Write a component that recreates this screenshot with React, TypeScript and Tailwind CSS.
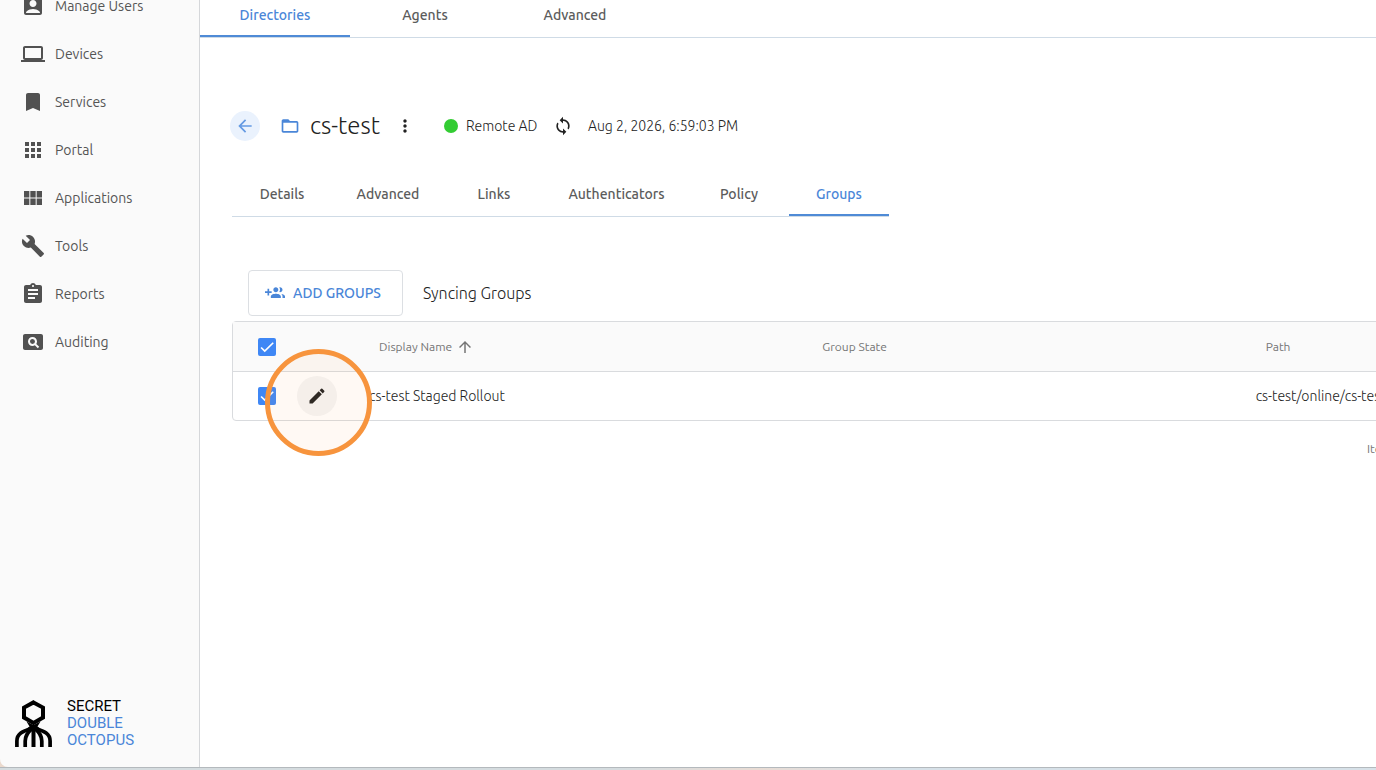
import React, { useState } from 'react';
import clsx from 'clsx';
import type { IconType } from 'react-icons';
import {
  MdAccountBox,
  MdApps,
  MdArrowBack,
  MdArrowUpward,
  MdAssignment,
  MdBookmark,
  MdBuild,
  MdComputer,
  MdEdit,
  MdFolderOpen,
  MdLoop,
  MdMoreVert,
  MdPageview,
  MdViewModule,
} from 'react-icons/md';

interface NavItem {
  label: string;
  icon: IconType;
}

interface Group {
  name: string;
  state: string;
  path: string;
}

const navItems: NavItem[] = [
  { label: 'Manage Users', icon: MdAccountBox },
  { label: 'Devices', icon: MdComputer },
  { label: 'Services', icon: MdBookmark },
  { label: 'Portal', icon: MdApps },
  { label: 'Applications', icon: MdViewModule },
  { label: 'Tools', icon: MdBuild },
  { label: 'Reports', icon: MdAssignment },
  { label: 'Auditing', icon: MdPageview },
];

const sections = ['Directories', 'Agents', 'Advanced'];

const detailTabs = [
  { label: 'Details', width: 'w-[100px]' },
  { label: 'Advanced', width: 'w-[112px]' },
  { label: 'Links', width: 'w-[100px]' },
  { label: 'Authenticators', width: 'w-[145px]' },
  { label: 'Policy', width: 'w-[100px]' },
  { label: 'Groups', width: 'w-[100px]' },
];

const groups: Group[] = [
  { name: 'cs-test Staged Rollout', state: '', path: 'cs-test/online/cs-test' },
];

function GroupAddIcon() {
  return (
    <svg viewBox="0 0 24 24" className="w-5 h-5" fill="currentColor" aria-hidden="true">
      <path d="M8 10H5V7H3v3H0v2h3v3h2v-3h3v-2zm10 1c1.66 0 2.99-1.34 2.99-3S19.66 5 18 5c-.32 0-.63.05-.91.14.57.81.9 1.79.9 2.86s-.34 2.04-.9 2.86c.28.09.59.14.91.14zm-5 0c1.66 0 2.99-1.34 2.99-3S14.66 5 13 5c-1.66 0-3 1.34-3 3s1.34 3 3 3zm6.62 2.16c.83.73 1.38 1.66 1.38 2.84v2h3v-2c0-1.54-2.37-2.49-4.38-2.84zM13 13c-2 0-6 1-6 3v2h12v-2c0-2-4-3-6-3z" />
    </svg>
  );
}

function OctopusLogo() {
  return (
    <svg viewBox="0 0 37 48" className="w-[37px] h-12" fill="none" stroke="#000" aria-hidden="true">
      <path d="M18.5 2.4 28 7.6V17.6L18.5 23 9 17.6V7.6Z" strokeWidth="4" />
      <path d="M11.5 21.5 18.5 25 25.5 21.5 22.5 26.5 27 30H10L14.5 26.5Z" fill="#000" stroke="none" />
      <path d="M18.5 25V47" strokeWidth="4" />
      <path d="M16 28.5C9 31 1.9 33 1.9 41V47" strokeWidth="3.7" />
      <path d="M21 28.5C28 31 35.1 33 35.1 41V47" strokeWidth="3.7" />
      <path d="M17 28.5C13 32 10.2 35 10.2 41V47" strokeWidth="3.7" />
      <path d="M20 28.5C24 32 26.8 35 26.8 41V47" strokeWidth="3.7" />
    </svg>
  );
}

interface CheckboxProps {
  label: string;
  checked: boolean;
  onChange: (checked: boolean) => void;
}

function Checkbox({ label, checked, onChange }: CheckboxProps) {
  return (
    <label className="relative block w-[18px] h-[18px] mx-auto">
      <input
        type="checkbox"
        aria-label={label}
        checked={checked}
        onChange={(e) => onChange(e.target.checked)}
        className="block appearance-none w-full h-full rounded-xs border-2 border-gray-500 checked:border-[#3f87f5] checked:bg-[#3f87f5]"
      />
      {checked && (
        <svg viewBox="0 0 24 24" className="absolute inset-0 pointer-events-none" fill="none" stroke="#fff" strokeWidth="2.2" aria-hidden="true">
          <path d="M4.1 12.7 9 17.6 20.3 6.3" />
        </svg>
      )}
    </label>
  );
}

function Sidebar() {
  return (
    <aside className="flex flex-col justify-between w-[200px] shrink-0 rounded-bl-lg bg-[#fafafa] border-r border-[#d5d7da]">
      <nav className="-mt-[18px]">
        {navItems.map(({ label, icon: Icon }) => (
          <a key={label} href="#" className="flex items-center h-12 pl-[21px] gap-[10px] text-sm text-[#555]">
            <Icon className="w-6 h-6 text-[#515151]" />
            {label}
          </a>
        ))}
      </nav>
      <div className="flex items-center gap-[15px] pl-[15px] pb-[18px]">
        <OctopusLogo />
        <div className="font-[Roboto,sans-serif] text-[15px] leading-[17px] text-black">
          <div>SECRET</div>
          <div className="text-[#4a86d8]">DOUBLE</div>
          <div className="text-[#4a86d8]">OCTOPUS</div>
        </div>
      </div>
    </aside>
  );
}

function App() {
  const [section, setSection] = useState('Directories');
  const [activeTab, setActiveTab] = useState('Groups');
  const [selected, setSelected] = useState<string[]>(groups.map((g) => g.name));

  const allSelected = selected.length === groups.length;

  const toggleGroup = (name: string, checked: boolean) => {
    setSelected((prev) => (checked ? [...prev, name] : prev.filter((n) => n !== name)));
  };

  return (
    <div className="flex flex-col h-screen overflow-hidden bg-[#ead9cd] font-['Ubuntu','Noto_Sans',sans-serif] text-[#222]">
      <div className="flex flex-1 min-h-0">
        <Sidebar />

        <main className="flex-1 min-w-0 overflow-hidden bg-white">
          {/* Section tabs */}
          <nav className="flex h-[38px] border-b border-[#cfdbe6]">
            {sections.map((name) => (
              <button
                key={name}
                onClick={() => setSection(name)}
                className={clsx(
                  'w-[150px] pb-1.5 text-sm font-medium border-b-2',
                  section === name ? 'text-[#4a86d8] border-[#4f8bd6]' : 'text-[#5c5c5c] border-transparent'
                )}
              >
                {name}
              </button>
            ))}
          </nav>

          <div className="pl-8 pt-[73px]">
            {/* Directory header */}
            <div className="flex items-center h-[30px] -ml-0.5">
              <button aria-label="Back" className="flex items-center justify-center w-[30px] h-[30px] rounded-full bg-[#eaf2fd] text-[#649ae3]">
                <MdArrowBack className="w-5 h-5" />
              </button>
              <MdFolderOpen className="w-5 h-5 ml-5 text-[#4a86d8]" />
              <h1 className="w-[70px] ml-[10px] text-2xl font-light whitespace-nowrap">cs-test</h1>
              <button aria-label="More" className="ml-[15px]">
                <MdMoreVert className="w-5 h-5" />
              </button>
              <span className="w-[14px] h-[14px] ml-[29px] rounded-full bg-[#33cc33]" />
              <span className="w-[72px] ml-2 text-sm font-light whitespace-nowrap">Remote AD</span>
              <button aria-label="Sync" className="ml-[15px]">
                <MdLoop className="w-5 h-5" />
              </button>
              <span className="ml-[15px] text-sm font-light whitespace-nowrap">Aug 2, 2026, 6:59:03 PM</span>
            </div>

            {/* Detail tabs */}
            <nav className="flex w-fit h-11 mt-8 border-b border-[#cfdbe6]">
              {detailTabs.map(({ label, width }) => (
                <button
                  key={label}
                  onClick={() => setActiveTab(label)}
                  className={clsx(
                    'text-sm font-medium border-b-2',
                    width,
                    activeTab === label ? 'text-[#4a86d8] border-[#4f8bd6]' : 'text-[#5c5c5c] border-transparent'
                  )}
                >
                  {label}
                </button>
              ))}
            </nav>

            {/* Toolbar */}
            <div className="flex items-center gap-5 mt-[53px] ml-4">
              <button className="flex items-center gap-2 w-[155px] h-[46px] pl-4 rounded-sm border border-[#dcdfe3] text-sm font-medium text-[#4a86d8]">
                <GroupAddIcon />
                ADD GROUPS
              </button>
              <span className="text-base font-light">Syncing Groups</span>
            </div>

            {/* Groups table */}
            <div className="w-[1468px] mt-[5px] rounded-sm border border-[#d9dbde]">
              <table className="w-full table-fixed border-separate border-spacing-0 text-left">
                <colgroup>
                  <col className="w-[68px]" />
                  <col className="w-[68px]" />
                  <col />
                  <col />
                  <col />
                </colgroup>
                <thead className="bg-[#fafafa] text-xs text-[#757575]">
                  <tr className="h-[50px] *:border-b *:border-[#d9dbde]">
                    <th>
                      <Checkbox
                        label="Select all groups"
                        checked={allSelected}
                        onChange={(checked) => setSelected(checked ? groups.map((g) => g.name) : [])}
                      />
                    </th>
                    <th />
                    <th className="pl-[10px] font-normal">
                      <button className="flex items-center gap-1">
                        Display Name
                        <MdArrowUpward className="w-[18px] h-[18px]" />
                      </button>
                    </th>
                    <th className="pl-[10px] font-normal">Group State</th>
                    <th className="pl-[10px] font-normal">Path</th>
                  </tr>
                </thead>
                <tbody className="text-sm font-light">
                  {groups.map((group) => (
                    <tr key={group.name} className="h-12">
                      <td>
                        <Checkbox
                          label={group.name}
                          checked={selected.includes(group.name)}
                          onChange={(checked) => toggleGroup(group.name, checked)}
                        />
                      </td>
                      <td>
                        <div className="relative w-10 h-10 -ml-1">
                          <button aria-label="Edit group" className="flex items-center justify-center w-10 h-10 rounded-full bg-[#f5f5f5]">
                            <MdEdit className="w-5 h-5" />
                          </button>
                          {/* Click highlight */}
                          <span className="absolute z-10 -left-8 -top-[27px] w-[107px] h-[107px] rounded-full border-[5px] border-[#f7943d] bg-[#f7943d]/6 pointer-events-none" />
                        </div>
                      </td>
                      <td>{group.name}</td>
                      <td>{group.state}</td>
                      <td>{group.path}</td>
                    </tr>
                  ))}
                </tbody>
              </table>
            </div>

            <div className="w-[1468px] mt-5 pl-[1135px] text-xs leading-4 text-[#757575]">Items per page:</div>
          </div>
        </main>
      </div>

      <footer className="h-[3px] shrink-0 border-t border-[#b4b9bd] bg-linear-to-r from-[#d5dcdf] from-45% via-[#e9dcd4] via-55% to-[#d7e1e8] to-65%" />
    </div>
  );
}

export default App;
